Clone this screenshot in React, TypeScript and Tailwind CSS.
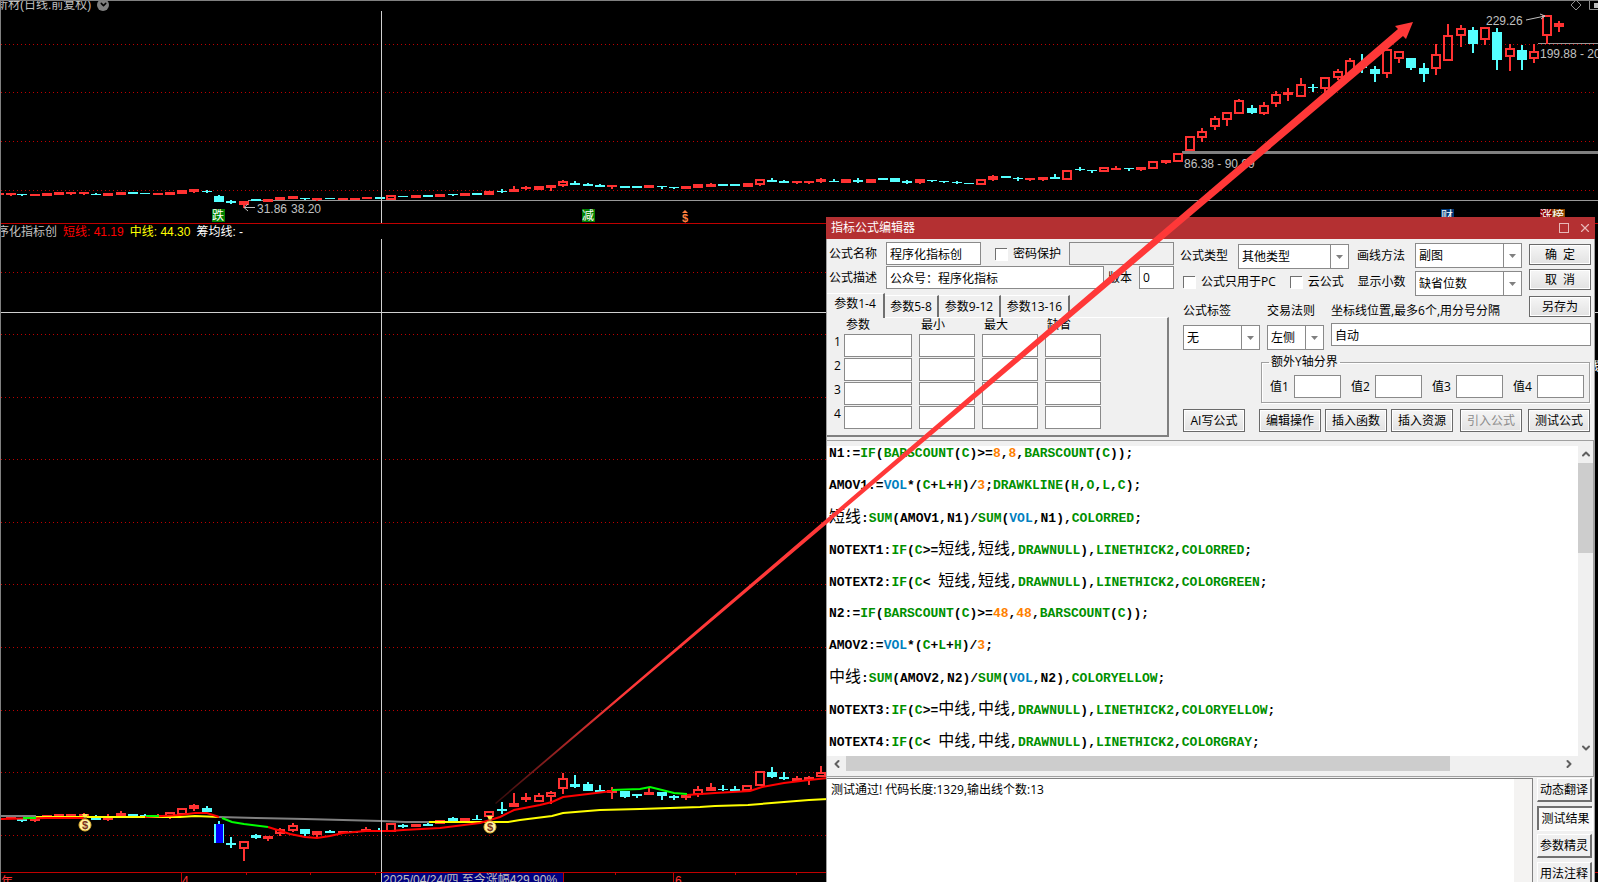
import React, { FC, ReactNode } from 'react';
import { ChevronDown, ChevronLeft, ChevronRight, ChevronUp, X } from 'lucide-react';

type Kind = 'up' | 'hollow' | 'down' | 'flat' | 'mark';
// x, body top, body bottom, high, low, kind
type Candle = [number, number, number, number, number, Kind];

const RED = '#ff3232';
const CYAN = '#54ffff';

const priceCandles: Candle[] = [
  [-1, 193, 195, 193, 195, 'up'],
  [11, 193, 195, 193, 196, 'up'],
  [22, 194, 195, 194, 196, 'down'],
  [35, 194, 196, 194, 196, 'up'],
  [47, 193, 196, 193, 196, 'up'],
  [59, 192, 195, 192, 195, 'up'],
  [71, 192, 194, 192, 195, 'up'],
  [84, 192, 194, 192, 195, 'up'],
  [96, 194, 195, 193, 195, 'down'],
  [108, 193, 196, 193, 196, 'up'],
  [121, 192, 195, 192, 195, 'up'],
  [133, 192, 194, 192, 194, 'down'],
  [145, 193, 194, 193, 194, 'down'],
  [158, 193, 195, 193, 195, 'up'],
  [170, 192, 195, 192, 195, 'up'],
  [182, 190, 194, 190, 194, 'up'],
  [194, 189, 192, 189, 193, 'up'],
  [207, 191, 192, 190, 193, 'down'],
  [219, 196, 202, 195, 202, 'down'],
  [231, 201, 203, 200, 204, 'down'],
  [244, 201, 205, 201, 208, 'up'],
  [256, 199, 201, 199, 201, 'down'],
  [268, 199, 202, 199, 202, 'up'],
  [280, 197, 200, 197, 200, 'up'],
  [293, 196, 199, 196, 199, 'up'],
  [305, 198, 199, 198, 200, 'down'],
  [317, 198, 200, 198, 201, 'up'],
  [330, 198, 199, 198, 199, 'down'],
  [343, 198, 200, 198, 200, 'up'],
  [355, 198, 200, 198, 200, 'up'],
  [367, 197, 199, 197, 199, 'up'],
  [380, 197, 199, 197, 199, 'down'],
  [391, 195, 200, 195, 200, 'hollow'],
  [403, 196, 197, 196, 197, 'down'],
  [416, 195, 198, 195, 198, 'up'],
  [428, 195, 197, 195, 197, 'down'],
  [440, 194, 197, 194, 197, 'up'],
  [453, 194, 195, 194, 196, 'down'],
  [465, 193, 196, 193, 196, 'up'],
  [477, 193, 195, 193, 195, 'down'],
  [489, 191, 195, 191, 195, 'up'],
  [502, 191, 192, 189, 193, 'down'],
  [514, 189, 192, 186, 192, 'up'],
  [526, 187, 189, 186, 190, 'up'],
  [539, 186, 190, 186, 190, 'up'],
  [551, 185, 188, 185, 191, 'up'],
  [563, 181, 186, 180, 187, 'hollow'],
  [575, 183, 185, 181, 185, 'down'],
  [588, 184, 186, 183, 186, 'down'],
  [600, 185, 187, 184, 187, 'down'],
  [612, 185, 187, 185, 189, 'up'],
  [625, 186, 188, 186, 188, 'down'],
  [637, 186, 188, 186, 188, 'down'],
  [649, 185, 188, 185, 188, 'up'],
  [662, 186, 187, 186, 189, 'down'],
  [674, 187, 188, 187, 189, 'down'],
  [686, 186, 189, 186, 189, 'up'],
  [698, 184, 188, 184, 188, 'up'],
  [711, 184, 187, 183, 187, 'up'],
  [723, 184, 186, 184, 186, 'down'],
  [735, 184, 186, 184, 186, 'down'],
  [748, 183, 187, 183, 187, 'up'],
  [760, 179, 185, 179, 186, 'hollow'],
  [772, 180, 182, 178, 182, 'down'],
  [784, 181, 183, 180, 183, 'down'],
  [797, 181, 183, 181, 184, 'up'],
  [809, 181, 183, 181, 184, 'up'],
  [821, 179, 182, 178, 183, 'up'],
  [834, 181, 182, 179, 182, 'down'],
  [846, 179, 183, 179, 183, 'up'],
  [858, 180, 182, 178, 183, 'down'],
  [871, 179, 183, 179, 183, 'up'],
  [883, 178, 180, 178, 180, 'down'],
  [895, 178, 182, 178, 182, 'down'],
  [907, 181, 183, 180, 184, 'down'],
  [920, 179, 183, 179, 184, 'up'],
  [932, 180, 181, 180, 182, 'down'],
  [944, 181, 182, 181, 183, 'down'],
  [957, 182, 183, 181, 184, 'down'],
  [969, 183, 184, 183, 184, 'down'],
  [981, 179, 185, 179, 185, 'hollow'],
  [993, 176, 180, 175, 181, 'up'],
  [1006, 176, 178, 176, 178, 'down'],
  [1018, 178, 179, 177, 181, 'down'],
  [1030, 178, 180, 178, 181, 'up'],
  [1043, 177, 180, 177, 181, 'up'],
  [1055, 177, 179, 174, 179, 'down'],
  [1067, 170, 180, 170, 180, 'hollow'],
  [1080, 169, 170, 167, 171, 'down'],
  [1092, 170, 171, 170, 173, 'down'],
  [1104, 167, 172, 167, 172, 'hollow'],
  [1116, 168, 170, 166, 170, 'up'],
  [1129, 168, 169, 168, 171, 'down'],
  [1141, 167, 170, 167, 171, 'up'],
  [1153, 161, 169, 161, 169, 'hollow'],
  [1166, 160, 163, 160, 164, 'up'],
  [1178, 153, 162, 153, 162, 'hollow'],
  [1190, 136, 151, 136, 151, 'hollow'],
  [1202, 131, 138, 128, 142, 'hollow'],
  [1215, 118, 127, 116, 130, 'hollow'],
  [1227, 112, 120, 112, 126, 'hollow'],
  [1239, 100, 114, 99, 114, 'hollow'],
  [1252, 108, 113, 105, 114, 'down'],
  [1264, 105, 114, 102, 115, 'hollow'],
  [1276, 94, 104, 91, 107, 'hollow'],
  [1288, 92, 95, 88, 101, 'up'],
  [1301, 84, 97, 78, 97, 'hollow'],
  [1313, 87, 88, 84, 92, 'down'],
  [1325, 77, 89, 77, 93, 'hollow'],
  [1338, 71, 78, 69, 80, 'hollow'],
  [1350, 60, 75, 58, 75, 'hollow'],
  [1362, 64, 68, 54, 73, 'down'],
  [1375, 69, 74, 66, 82, 'down'],
  [1387, 49, 74, 49, 78, 'hollow'],
  [1399, 51, 59, 51, 63, 'hollow'],
  [1411, 58, 68, 58, 70, 'down'],
  [1424, 68, 74, 63, 82, 'down'],
  [1436, 54, 69, 44, 75, 'hollow'],
  [1448, 35, 61, 24, 61, 'hollow'],
  [1461, 28, 36, 25, 47, 'hollow'],
  [1473, 30, 44, 27, 53, 'down'],
  [1485, 27, 40, 27, 45, 'hollow'],
  [1497, 32, 60, 28, 70, 'down'],
  [1510, 48, 57, 44, 71, 'hollow'],
  [1522, 50, 60, 45, 70, 'down'],
  [1534, 51, 59, 44, 63, 'hollow'],
  [1547, 15, 36, 15, 44, 'hollow'],
  [1559, 23, 27, 21, 32, 'up']
];

const subCandles: Candle[] = [
  [-1, 818, 820, 818, 820, 'up'],
  [11, 817, 819, 817, 819, 'up'],
  [22, 819, 821, 819, 822, 'down'],
  [35, 819, 821, 819, 822, 'up'],
  [47, 815, 818, 815, 818, 'up'],
  [59, 814, 816, 814, 816, 'up'],
  [71, 814, 816, 814, 816, 'up'],
  [84, 814, 817, 813, 817, 'up'],
  [96, 816, 820, 815, 820, 'down'],
  [108, 816, 820, 814, 821, 'up'],
  [121, 813, 816, 811, 816, 'up'],
  [133, 814, 816, 814, 816, 'down'],
  [145, 815, 817, 814, 817, 'down'],
  [158, 815, 817, 814, 818, 'up'],
  [170, 812, 817, 812, 819, 'hollow'],
  [182, 808, 815, 808, 815, 'hollow'],
  [194, 805, 809, 804, 811, 'up'],
  [207, 808, 812, 806, 812, 'down'],
  [219, 824, 843, 821, 843, 'mark'],
  [231, 843, 845, 837, 848, 'down'],
  [244, 841, 849, 841, 861, 'hollow'],
  [256, 835, 838, 834, 839, 'down'],
  [268, 836, 839, 836, 841, 'up'],
  [280, 829, 834, 828, 836, 'hollow'],
  [293, 825, 831, 823, 832, 'hollow'],
  [305, 829, 834, 829, 836, 'down'],
  [317, 831, 835, 831, 837, 'up'],
  [330, 831, 833, 830, 833, 'down'],
  [343, 831, 833, 831, 833, 'up'],
  [354, 831, 833, 831, 833, 'flat'],
  [366, 829, 832, 827, 832, 'up'],
  [379, 830, 832, 828, 832, 'flat'],
  [391, 823, 832, 823, 832, 'hollow'],
  [403, 825, 827, 824, 828, 'down'],
  [416, 824, 827, 824, 827, 'up'],
  [428, 824, 826, 822, 826, 'down'],
  [440, 820, 824, 820, 824, 'hollow'],
  [453, 818, 821, 817, 821, 'down'],
  [465, 818, 821, 818, 821, 'hollow'],
  [477, 819, 820, 815, 820, 'down'],
  [489, 811, 817, 811, 817, 'hollow'],
  [502, 809, 811, 802, 814, 'down'],
  [514, 803, 807, 793, 807, 'up'],
  [526, 797, 800, 793, 802, 'up'],
  [539, 795, 802, 793, 802, 'hollow'],
  [551, 792, 797, 791, 804, 'hollow'],
  [563, 778, 789, 773, 794, 'hollow'],
  [575, 784, 787, 775, 788, 'down'],
  [588, 784, 791, 782, 791, 'down'],
  [600, 790, 792, 785, 792, 'down'],
  [612, 790, 793, 787, 799, 'up'],
  [625, 791, 797, 791, 798, 'down'],
  [637, 794, 796, 794, 798, 'down'],
  [649, 792, 795, 788, 795, 'up'],
  [662, 792, 796, 792, 800, 'down'],
  [674, 796, 798, 795, 800, 'down'],
  [686, 795, 798, 795, 800, 'up'],
  [698, 789, 795, 786, 797, 'hollow'],
  [711, 787, 791, 783, 791, 'up'],
  [723, 789, 790, 785, 791, 'down'],
  [735, 789, 791, 786, 791, 'down'],
  [747, 785, 791, 785, 791, 'hollow'],
  [760, 771, 786, 771, 786, 'hollow'],
  [772, 772, 777, 767, 778, 'down'],
  [784, 777, 779, 772, 780, 'down'],
  [797, 778, 781, 776, 781, 'up'],
  [809, 777, 780, 776, 785, 'up'],
  [821, 772, 777, 766, 777, 'hollow']
];

const Candles: FC<{ data: Candle[] }> = ({ data }) => (
  <g>
    {data.map(([x, top, bottom, high, low, kind]) => {
      const up = kind === 'up' || kind === 'hollow';
      const color = up ? RED : CYAN;
      return (
        <g key={x} fill={color}>
          {high < top && <rect x={x - 1} y={high} width={2} height={top - high} />}
          {low > bottom && <rect x={x - 1} y={bottom} width={2} height={low - bottom} />}
          {kind === 'hollow' ? (
            <rect
              x={x - 4}
              y={top + 1}
              width={8}
              height={bottom - top - 2}
              fill="none"
              stroke={color}
              strokeWidth={2}
            />
          ) : (
            <rect x={x - 5} y={top} width={kind === 'flat' ? 9 : 10} height={bottom - top} />
          )}
          {kind === 'mark' && <rect x={x - 3} y={top} width={7} height={bottom - top} fill="#0000ff" />}
          {kind === 'flat' && <rect x={x - 2} y={top} width={4} height={2} fill="#00e600" />}
        </g>
      );
    })}
  </g>
);

const Grid: FC<{ rows: number[] }> = ({ rows }) => (
  <g stroke="#c00000" strokeDasharray="1 3">
    {rows.map(y => (
      <line key={y} x1={1} x2="100%" y1={y} y2={y} />
    ))}
  </g>
);

const Badge: FC<{ x: number; y: number; fill: string; children: string }> = ({
  x,
  y,
  fill,
  children
}) => (
  <g>
    <rect x={x} y={y} width={13} height={13} fill={fill} />
    <text x={x} y={y + 11} fill="#fff" fontSize={12}>
      {children}
    </text>
  </g>
);

const MoneyBag: FC<{ x: number; y: number }> = ({ x, y }) => (
  <g transform={`translate(${x} ${y})`}>
    <path d="M-3 -9h6l-2 4h-2z" fill="#ffe84a" />
    <path d="M-2 -5h4" stroke="#8a3c10" />
    <ellipse cx={0} cy={2} rx={6} ry={6} fill="#fff1a0" stroke="#e0b030" />
    <text x={0} y={6} textAnchor="middle" fontSize={11} fontWeight={700} fill="#7a3020">
      $
    </text>
  </g>
);

const PriceChart: FC = () => (
  <svg className="block h-[212px] w-full shrink-0" aria-label="日线">
    <g transform="translate(-1 -11)">
      <Grid rows={[44.5, 92.5, 141.5, 190.5]} />
      <path d="M248 200.5H2400M1538 43.5H2400" stroke="#999" />
      <path d="M1182 152.5H2400" stroke="#808080" strokeWidth={3} />
      <Candles data={priceCandles} />
      <path d="M381.5 11V224" stroke="#d0d0d0" />
      <g fill="#c0c0c0" fontSize={12}>
        <text x={1184} y={168}>86.38 - 90.99</text>
        <text x={1486} y={25}>229.26</text>
        <text x={1540} y={58}>199.88 - 204.40</text>
        <text x={257} y={213}>31.86</text>
        <text x={291} y={213}>38.20</text>
      </g>
      <path
        d="M1526 20L1545 16M1540 14l5 2l-4 3M245 207.5H255M248 204l-4 3.5l4 3.5"
        stroke="#c0c0c0"
        fill="none"
      />
      <Badge x={212} y={209} fill="#008000">跌</Badge>
      <Badge x={582} y={209} fill="#008000">减</Badge>
      <Badge x={1441} y={209} fill="#003878">财</Badge>
      <Badge x={1540} y={209} fill="#8b0000">涨</Badge>
      <Badge x={1552} y={209} fill="#8a4500">榜</Badge>
      <g fill="#ff8040">
        <path d="M685 210l3 3h-6z" />
        <text x={685} y={222} textAnchor="middle" fontSize={11} fontWeight={700}>$</text>
      </g>
    </g>
  </svg>
);

const IndicatorChart: FC = () => (
  <svg className="block min-h-[643px] w-full flex-1" aria-label="程序化指标创">
    <g transform="translate(-1 -239)">
      <Grid rows={[272.5, 334.5, 397.5, 459.5, 522.5, 584.5, 647.5, 710.5, 772.5, 835.5]} />
      <Candles data={subCandles} />
      <g fill="none" strokeWidth={2}>
        <path d="M1 816H36M219 817L256 818L305 819L343 820L381 821L405 822H429" stroke="#808080" />
        <path
          d="M36 817L180 817L195 816L219 817M429 822H508L520 820L552 816L563 813L600 810L640 809L700 807L715 806L748 805L784 802L809 800L828 799"
          stroke="#ffff00"
        />
        <path
          d="M1 819L47 818L84 818M145 817L180 815L195 813H207L219 817M268 827L290 834L305 837L317 838L330 836L343 833L366 831H391L403 830L440 828L480 823L500 817L514 810L540 805L552 802L563 797L588 794L612 791M687 795L715 793L750 791L762 787L784 783L809 780L828 778"
          stroke="#ff0000"
        />
        <path
          d="M23 818H36M146 816H159M222 818L232 822L244 824L268 827M612 790L640 789L650 787L662 790L674 793L687 794"
          stroke="#00ff00"
        />
      </g>
      <MoneyBag x={85} y={823} />
      <MoneyBag x={490} y={825} />
      <path d="M1 312.5H2400M381.5 239V900" stroke="#d0d0d0" />
      <path
        d="M1 872.5H2400M181.5 873V900M246.5 873v2M310.5 873v2M375.5 873v2M563.5 873V900M615.5 873v2M673.5 873V900M735.5 873v2M796.5 873v2"
        stroke="#c00000"
      />
      <rect x={382} y={873} width={181} height={20} fill="#000080" />
      <g fontSize={12}>
        <text x={383} y={884} fill="#c0c0c0">2025/04/24/四 至今涨幅429.90%</text>
        <text x={1} y={886} fill={RED}>年</text>
        <text x={182} y={885} fill={RED}>4</text>
        <text x={675} y={885} fill={RED}>6</text>
        <text x={1588} y={371} fill="#fff">线</text>
      </g>
    </g>
  </svg>
);

interface FieldProps {
  id: string;
  label: string;
  width: string;
  value?: string;
  labelWidth?: string;
}

const inputStyle = 'h-[23px] border border-[#8a8a8a] bg-white px-[3px] outline-none';

const Field: FC<FieldProps> = ({ id, label, width, value = '', labelWidth = '' }) => (
  <>
    <label htmlFor={id} className={`shrink-0 whitespace-nowrap ${labelWidth}`}>
      {label}
    </label>
    <input id={id} defaultValue={value} className={`${inputStyle} ${width}`} />
  </>
);

const Select: FC<{ id: string; value: string; width: string; label?: string }> = ({
  id,
  value,
  width,
  label
}) => (
  <span className={`relative flex h-[25px] shrink-0 border border-[#8a8a8a] bg-white ${width}`}>
    <select id={id} aria-label={label} className="w-full appearance-none bg-white pl-[3px] outline-none">
      <option>{value}</option>
    </select>
    <span className="pointer-events-none absolute inset-y-0 right-0 flex w-[18px] items-center justify-center border-l border-[#8a8a8a]">
      <svg width="7" height="4">
        <path d="M0 0h7l-3.5 4z" fill="#808080" />
      </svg>
    </span>
  </span>
);

const Check: FC<{ id: string; label: string }> = ({ id, label }) => (
  <span className="flex items-center gap-[6px] whitespace-nowrap">
    <input
      id={id}
      type="checkbox"
      className="h-3 w-3 appearance-none border-t border-l border-[#707070] bg-white shadow-[1px_1px_0_#fff]"
    />
    <label htmlFor={id}>{label}</label>
  </span>
);

const Button: FC<{ children: ReactNode; disabled?: boolean; tall?: boolean }> = ({
  children,
  disabled,
  tall
}) => (
  <button
    type="button"
    disabled={disabled}
    className={`flex w-[62px] shrink-0 items-center justify-center whitespace-pre border border-[#6a6a6a] bg-linear-to-b from-[#f6f6f6] to-[#e2e2e2] shadow-[inset_1px_1px_0_#fff,inset_-1px_-1px_0_#fff] disabled:text-[#8c8c8c] ${
      tall ? 'h-[23px]' : 'h-[21px]'
    }`}>
    {children}
  </button>
);

const tabs = [
  { label: '参数1-4', width: 'w-[58px]' },
  { label: '参数5-8', width: 'w-[54px]' },
  { label: '参数9-12', width: 'w-[62px]' },
  { label: '参数13-16', width: 'w-[69px]' }
];
const columns = ['参数', '最小', '最大', '缺省'];

const ParamTable: FC = () => (
  <div className="mt-1 w-[342px]">
    <div className="flex items-end" role="tablist">
      {tabs.map(({ label, width }, i) => (
        <button
          key={label}
          type="button"
          role="tab"
          aria-selected={i === 0}
          className={`border-t border-r-2 border-t-white border-r-[#707070] ${width} ${
            i === 0 ? 'relative z-10 -mb-px h-[25px] bg-[#f0f0f0] pb-1' : 'h-[22px]'
          }`}>
          {label}
        </button>
      ))}
    </div>
    <div className="h-[120px] border-t border-r-2 border-b-2 border-t-white border-r-[#808080] border-b-[#808080] pl-[6px]">
      <table className="border-separate border-spacing-0">
        <thead>
          <tr className="h-4 leading-[14px]">
            <th className="w-[11px] p-0" />
            {columns.map(column => (
              <th key={column} className="p-0 pl-[2px] text-left align-top font-normal">
                {column}
              </th>
            ))}
          </tr>
        </thead>
        <tbody>
          {[1, 2, 3, 4].map(row => (
            <tr key={row} className="h-6">
              <td className="p-0 pl-px align-top leading-4">{row}</td>
              {columns.map((column, i) => (
                <td key={column} className="p-0 pr-[7px] align-top">
                  <input
                    aria-label={`${column}${row}`}
                    className={`block ${inputStyle} ${i === 0 ? 'w-[68px]' : 'w-[56px]'}`}
                  />
                </td>
              ))}
            </tr>
          ))}
        </tbody>
      </table>
    </div>
  </div>
);

const LeftForm: FC = () => (
  <div className="w-[349px] shrink-0 pt-[3px]">
    <div className="flex items-center pl-[2px]">
      <Field id="name" label="公式名称" width="w-[95px]" value="程序化指标创" labelWidth="w-[57px]" />
      <span className="ml-[14px]">
        <Check id="lock" label="密码保护" />
      </span>
      <input
        aria-label="密码"
        disabled
        className="ml-2 h-[23px] w-[105px] border border-[#8a8a8a] bg-[#f0f0f0]"
      />
    </div>
    <div className="mt-px flex items-center pl-[2px]">
      <Field id="desc" label="公式描述" width="w-[218px]" value="公众号：程序化指标" labelWidth="w-[57px]" />
      <span className="ml-1 flex items-center">
        <Field id="version" label="版本" width="w-[35px]" value="0" labelWidth="w-[31px]" />
      </span>
    </div>
    <ParamTable />
  </div>
);

const RightForm: FC = () => (
  <div className="ml-[4px] min-w-0 flex-1 pt-[3px] pr-[3px]">
    <div className="flex justify-between">
      <div className="w-[342px]">
        <div className="flex items-center justify-between">
          <label htmlFor="kind">公式类型</label>
          <span className="-mr-[2px] pt-[2px]">
            <Select id="kind" value="其他类型" width="w-[111px]" />
          </span>
          <label htmlFor="method">画线方法</label>
          <Select id="method" value="副图" width="w-[107px]" />
        </div>
        <div className="mt-[2px] flex items-center justify-between pl-[3px]">
          <span className="flex gap-[14px] pb-[3px]">
            <Check id="pc" label="公式只用于PC" />
            <Check id="cloud" label="云公式" />
          </span>
          <label htmlFor="decimals" className="pb-1 pl-1">显示小数</label>
          <Select id="decimals" value="缺省位数" width="w-[107px]" />
        </div>
        <div className="mt-[3px] flex h-6 items-center pl-[3px] whitespace-nowrap">
          <label htmlFor="tag" className="w-[84px]">公式标签</label>
          <label htmlFor="rule" className="w-[64px]">交易法则</label>
          <label htmlFor="axis">坐标线位置,最多6个,用分号分隔</label>
        </div>
      </div>
      <div className="flex flex-col pt-[2px]">
        <Button>确  定</Button>
        <div className="h-1" />
        <Button>取  消</Button>
        <div className="h-[6px]" />
        <Button>另存为</Button>
      </div>
    </div>
    <div className="flex items-start pl-[3px]">
      <div className="pt-[2px]">
        <Select id="tag" value="无" width="w-[77px]" />
      </div>
      <div className="ml-[7px] pt-[2px]">
        <Select id="rule" value="左侧" width="w-[57px]" />
      </div>
      <input id="axis" defaultValue="自动" className={`ml-[7px] min-w-0 flex-1 ${inputStyle}`} />
    </div>
    <fieldset className="mt-1 mr-px ml-[81px] h-[49px] border border-[#a0a0a0] px-[5px] shadow-[inset_1px_1px_0_#fff,1px_1px_0_#fff]">
      <legend className="ml-[2px] px-[2px] leading-4">额外Y轴分界</legend>
      <div className="mt-[5px] flex items-center justify-between pl-[3px]">
        {[1, 2, 3, 4].map(n => (
          <span key={n} className="flex items-center gap-[5px]">
            <Field id={`y${n}`} label={`值${n}`} width="w-[47px]" />
          </span>
        ))}
      </div>
    </fieldset>
    <div className="mt-[6px] mr-px flex justify-between pl-[3px]">
      <Button tall>AI写公式</Button>
      <div className="flex gap-1">
        <span className="flex gap-1">
          <Button tall>编辑操作</Button>
          <Button tall>插入函数</Button>
          <Button tall>插入资源</Button>
        </span>
        <span className="ml-[3px] flex gap-[6px]">
          <Button tall disabled>引入公式</Button>
          <Button tall>测试公式</Button>
        </span>
      </div>
    </div>
  </div>
);

const code = [
  'N1:=IF(BARSCOUNT(C)>=8,8,BARSCOUNT(C));',
  'AMOV1:=VOL*(C+L+H)/3;DRAWKLINE(H,O,L,C);',
  '短线:SUM(AMOV1,N1)/SUM(VOL,N1),COLORRED;',
  'NOTEXT1:IF(C>=短线,短线,DRAWNULL),LINETHICK2,COLORRED;',
  'NOTEXT2:IF(C< 短线,短线,DRAWNULL),LINETHICK2,COLORGREEN;',
  'N2:=IF(BARSCOUNT(C)>=48,48,BARSCOUNT(C));',
  'AMOV2:=VOL*(C+L+H)/3;',
  '中线:SUM(AMOV2,N2)/SUM(VOL,N2),COLORYELLOW;',
  'NOTEXT3:IF(C>=中线,中线,DRAWNULL),LINETHICK2,COLORYELLOW;',
  'NOTEXT4:IF(C< 中线,中线,DRAWNULL),LINETHICK2,COLORGRAY;'
];

const tokenClass = (token: string) => {
  if (/^[\u4e00-\u9fff]+$/.test(token)) return 'text-base leading-none font-normal';
  if (/^\d+$/.test(token)) return 'text-[#ff8000]';
  if (token === 'VOL') return 'text-[#0080c0]';
  if (/^(N\d|AMOV\d|NOTEXT\d)$/.test(token)) return 'text-black';
  if (/^[A-Z]/.test(token)) return 'text-[#009000]';
  return 'text-black';
};

const CodeLine: FC<{ text: string }> = ({ text }) => (
  <div className="h-8 whitespace-pre">
    {(text.match(/[\u4e00-\u9fff]+|[A-Z]+\d*|\d+|[^A-Z\d\u4e00-\u9fff]+/g) || []).map((token, i) => (
      <span key={i} className={tokenClass(token)}>
        {token}
      </span>
    ))}
  </div>
);

const Editor: FC = () => (
  <div className="mt-[3px] border-t border-r border-b border-[#a0a0a0] pt-[5px] pb-[5px]">
    <div className="flex h-[310px]">
      <div
        role="textbox"
        aria-multiline="true"
        className="min-w-0 flex-1 overflow-hidden bg-white pl-[2px] font-['Liberation_Mono','Noto_Sans_CJK_SC',monospace] text-[13px] leading-4 font-bold">
        {code.map(line => (
          <CodeLine key={line} text={line} />
        ))}
      </div>
      <div className="flex w-[15px] flex-col items-center bg-[#f0f0f0] text-[#606060]">
        <ChevronUp size={12} strokeWidth={4} className="mt-[2px] mb-[3px] shrink-0" />
        <div className="h-[90px] w-full bg-[#cdcdcd]" />
        <ChevronDown size={12} strokeWidth={4} className="mt-auto mb-[2px]" />
      </div>
    </div>
    <div className="flex h-[15px] items-center pr-[18px] text-[#606060]">
      <ChevronLeft size={12} strokeWidth={4} className="mr-[3px] ml-1" />
      <div className="h-full w-[604px] bg-[#cdcdcd]" />
      <ChevronRight size={12} strokeWidth={4} className="ml-auto" />
    </div>
  </div>
);

const sideTabs = ['动态翻译', '测试结果', '参数精灵', '用法注释'];

const Output: FC = () => (
  <div className="mt-[1px] flex min-h-0 flex-1">
    <div className="flex flex-1 border-t border-r border-[#808080] bg-white">
      <output className="flex-1 px-1 pt-[3px]">测试通过! 代码长度:1329,输出线个数:13</output>
      <div className="w-[18px] bg-[#f4f3f2]" />
    </div>
    <div className="flex w-[61px] flex-col gap-1 pl-[4px]">
      {sideTabs.map((tab, i) => (
        <button
          key={tab}
          type="button"
          className={`h-6 w-[55px] shrink-0 text-center whitespace-nowrap ${
            i === 1
              ? 'border-t-2 border-l-2 border-[#707070] bg-[#f9f9f9] shadow-[1px_1px_0_#fff]'
              : 'border-t border-r-2 border-b-2 border-l border-t-white border-r-[#707070] border-b-[#707070] border-l-white bg-[#f0f0f0]'
          }`}>
          {tab}
        </button>
      ))}
    </div>
  </div>
);

const FormulaDialog: FC = () => (
  <section
    aria-label="指标公式编辑器"
    className="absolute top-[216px] right-[3px] bottom-0 flex w-[769px] flex-col overflow-hidden bg-[#f0f0f0] text-xs text-black">
    <header className="flex h-[22px] shrink-0 items-center bg-[#b43032] pr-[3px] pl-[5px] text-white">
      <h1 className="flex-1">指标公式编辑器</h1>
      <button type="button" aria-label="最大化" className="mr-[9px] h-[10px] w-[10px] border border-[#e8b8b8]" />
      <button type="button" aria-label="关闭" className="text-[#e8b8b8]">
        <X size={14} strokeWidth={2} />
      </button>
    </header>
    <div className="flex min-h-0 flex-1 flex-col border-r border-l border-[#a0a0a0]">
      <div className="flex">
        <LeftForm />
        <RightForm />
      </div>
      <Editor />
      <Output />
    </div>
  </section>
);

const TrendArrow: FC = () => (
  <svg className="pointer-events-none absolute inset-0 h-full w-full">
    <defs>
      <linearGradient id="fade" gradientUnits="userSpaceOnUse" x1={495} y1={803} x2={620} y2={696}>
        <stop offset="0" stopColor="#ff3838" stopOpacity={0.2} />
        <stop offset="1" stopColor="#ff3838" />
      </linearGradient>
    </defs>
    <path d="M494 802L1397 28L1394 25L1412 21L1405 38L1402 35L495 803Z" fill="url(#fade)" />
  </svg>
);

const App: FC = () => (
  <main className="relative flex h-screen flex-col overflow-hidden border-t border-l border-[#808080] bg-black font-['Open_Sans','Noto_Sans_CJK_SC',sans-serif] text-xs">
    <section className="flex flex-1 flex-col font-['Liberation_Sans','Noto_Sans_CJK_SC',sans-serif]">
      <header className="flex h-[10px] shrink-0 items-center text-[#c0c0c0]">
        <span className="-ml-[5px] pb-[3px] leading-3">新材(日线.前复权)</span>
        <span className="mb-[3px] ml-[6px] flex h-3 w-3 items-center justify-center rounded-full bg-[#808080] text-black">
          <ChevronDown size={9} strokeWidth={4} />
        </span>
        <svg className="ml-auto h-[10px] w-[27px]">
          <path d="M5 -1L10 4L5 9L0 4zM18.5 -1V8.5H29" fill="none" stroke="#909090" />
          <path d="M23 2h5v5h-5z" fill="#c0c0c0" />
        </svg>
      </header>
      <PriceChart />
      <div className="flex h-4 shrink-0 items-center gap-[6px] border-t border-[#c00000] leading-4 text-[#c0c0c0]">
        <span className="-ml-1">序化指标创</span>
        <span className="text-[#ff0000]">短线: 41.19</span>
        <span className="text-[#ffff00]">中线: 44.30</span>
        <span className="text-white">筹均线: -</span>
      </div>
      <IndicatorChart />
    </section>
    <FormulaDialog />
    <TrendArrow />
  </main>
);

export default App;
